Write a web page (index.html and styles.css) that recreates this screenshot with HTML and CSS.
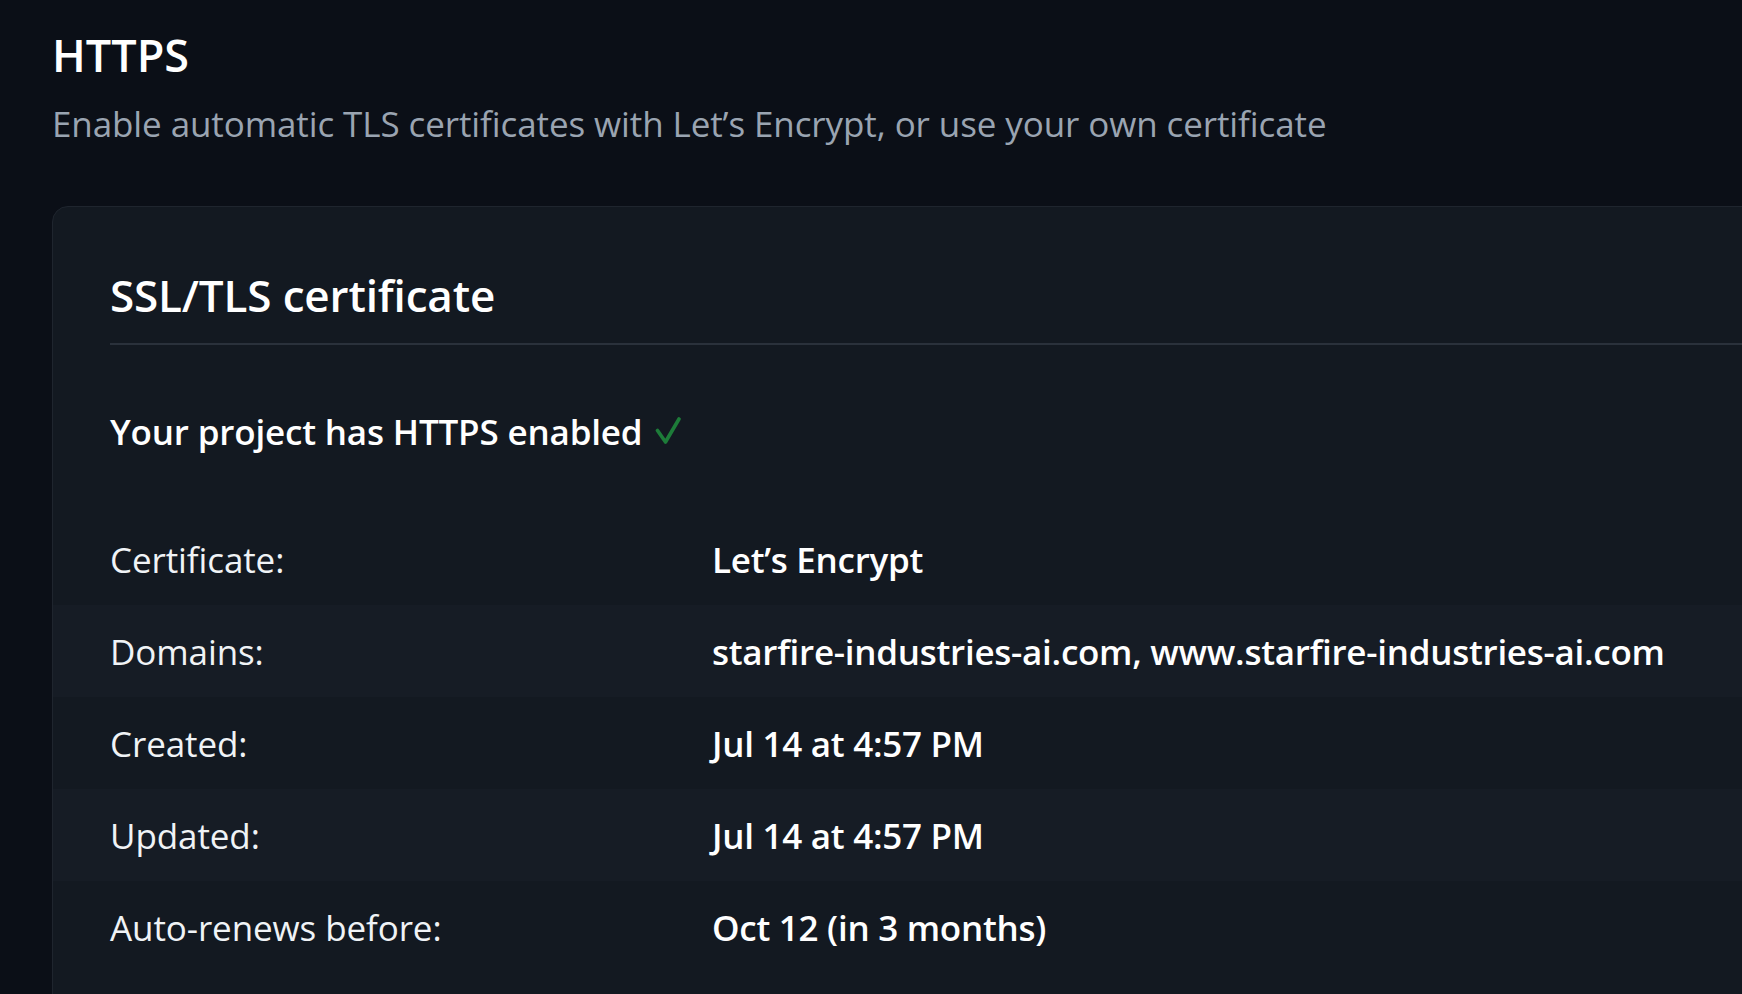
FILE: index.html
```html
<!DOCTYPE html>
<html lang="en">
<head>
<meta charset="utf-8">
<title>HTTPS</title>
<link rel="stylesheet" href="styles.css">
</head>
<body>
<main class="page">
  <header class="section-head">
    <h1 class="title">HTTPS</h1>
    <p class="subtitle">Enable automatic TLS certificates with Let’s Encrypt, or use your own certificate</p>
  </header>
  <section class="card">
    <div class="card-head">
      <h2 class="card-title">SSL/TLS certificate</h2>
    </div>
    <p class="status">Your project has HTTPS enabled<svg class="check" viewBox="0 0 26 28" width="26" height="28" aria-label="enabled"><path d="M2.5 13.5 L10.5 25 L24 2" fill="none" stroke="#1d7c39" stroke-width="3.6" stroke-linecap="round" stroke-linejoin="round"/></svg></p>
    <dl class="details">
      <div class="row">
        <dt class="label">Certificate:</dt>
        <dd class="value">Let’s Encrypt</dd>
      </div>
      <div class="row alt">
        <dt class="label">Domains:</dt>
        <dd class="value">starfire-industries-ai.com, www.starfire-industries-ai.com</dd>
      </div>
      <div class="row">
        <dt class="label">Created:</dt>
        <dd class="value">Jul 14 at 4:57 PM</dd>
      </div>
      <div class="row alt">
        <dt class="label">Updated:</dt>
        <dd class="value">Jul 14 at 4:57 PM</dd>
      </div>
      <div class="row">
        <dt class="label">Auto-renews before:</dt>
        <dd class="value">Oct 12 (in 3 months)</dd>
      </div>
    </dl>
  </section>
</main>
</body>
</html>
```

FILE: styles.css
```css
html, body {
  margin: 0;
  padding: 0;
  height: 100%;
  overflow: hidden;
}

body {
  background: #0b0f17;
  color: #f0f3f6;
  font-family: "Open Sans", "Noto Sans", "Liberation Sans", sans-serif;
}

.page {
  padding: 25px 0 0 52px;
  overflow: hidden;
}

.section-head {
  margin: 0;
}

.title {
  margin: 0;
  font-size: 45px;
  line-height: 60px;
  font-weight: 600;
  color: #ffffff;
  letter-spacing: 0;
}

.subtitle {
  margin: 15px 0 0;
  font-size: 35px;
  line-height: 48px;
  color: #9aa4b1;
  letter-spacing: -0.1px;
}

.card {
  margin-top: 58px;
  width: 1800px;
  background: #131921;
  border: 1px solid #1f252e;
  border-radius: 16px;
  padding-bottom: 40px;
}

.card-head {
  margin: 0 0 0 57px;
  padding-top: 58px;
  border-bottom: 2px solid #2a313b;
}

.card-title {
  margin: 0;
  font-size: 44px;
  line-height: 60px;
  font-weight: 600;
  color: #ffffff;
  letter-spacing: -0.15px;
  padding-bottom: 18px;
}

.status {
  display: flex;
  align-items: center;
  margin: 63px 0 0 57px;
  font-size: 35px;
  line-height: 48px;
  font-weight: 600;
  color: #ffffff;
  letter-spacing: -0.17px;
}

.check {
  margin-left: 13px;
  margin-top: -2px;
}

.details {
  margin: 57px 0 0;
}

.row {
  display: grid;
  grid-template-columns: 602px 1fr;
  align-items: center;
  height: 92px;
  padding-left: 57px;
}

.row.alt {
  background: #161c25;
}

.label {
  margin: 0;
  font-size: 35px;
  color: #f0f3f6;
  letter-spacing: -0.1px;
}

.value {
  margin: 0;
  font-size: 35px;
  font-weight: 600;
  color: #ffffff;
  letter-spacing: -0.27px;
}
```
